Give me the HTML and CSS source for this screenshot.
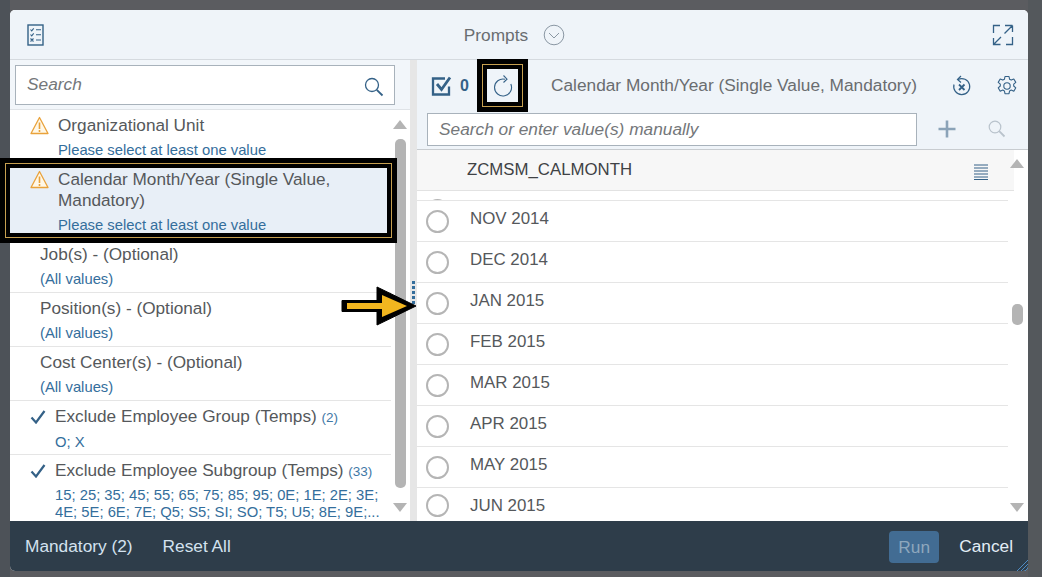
FILE: index.html
```html
<!DOCTYPE html>
<html lang="en">
<head>
<meta charset="utf-8">
<title>Prompts</title>
<link rel="stylesheet" href="styles.css">
</head>
<body>
<div class="dialog">
  <header class="head">
    <svg class="head-doc" width="18" height="22" viewBox="0 0 18 22"><rect x="1" y="1" width="15" height="20" fill="none" stroke="#346187" stroke-width="1.4"/><path d="M3.500 5.500l1.200 1.300 2-2.500M3.500 10.500l1.200 1.300 2-2.500M3.500 14.500l3 3M6.500 14.500l-3 3M9 5.700h5M9 10.700h5M9 16h5" fill="none" stroke="#346187" stroke-width="1.100"/></svg>
    <div class="head-title">
      <span>Prompts</span>
      <svg width="22" height="22" viewBox="0 0 22 22"><circle cx="11" cy="11" r="9.800" fill="none" stroke="#8a97a3" stroke-width="1"/><path d="M6 9l5 5 5-5" fill="none" stroke="#8a97a3" stroke-width="1"/></svg>
    </div>
    <svg class="head-exp" width="22" height="22" viewBox="0 0 22 22"><path d="M8 1.500H1.500V9M13 1.500h7.500M20.500 1.500L12.500 9.500M20.500 1.500V8M1.500 20.500L9 13M1.500 14v6.500h7M14 20.500h6.500V13" fill="none" stroke="#346187" stroke-width="1.300"/></svg>
  </header>
  <div class="main">
    <section class="left">
      <div class="left-search">
        <div class="search-box">
          <span>Search</span>
          <svg width="20" height="20" viewBox="0 0 20 20"><circle cx="8" cy="8" r="6.500" fill="none" stroke="#346187" stroke-width="1.300"/><path d="M12.800 12.800L18.500 18.500" stroke="#346187" stroke-width="1.800"/></svg>
        </div>
      </div>
      <div class="prompt-list">
        <div class="prompt warn-row">
          <svg class="warn" width="19" height="19" viewBox="0 0 19 19"><path d="M9.500 1.500L18 17.500H1z" fill="#fff8e8" stroke="#e9a23b" stroke-width="1.300" stroke-linejoin="round"/><path d="M9.500 6.500v6.500M9.500 14v2" stroke="#e9a23b" stroke-width="1.600"/></svg>
          <div class="prompt-text"><div class="prompt-title">Organizational Unit</div><div class="prompt-sub">Please select at least one value</div></div>
        </div>
        <div class="prompt warn-row selected">
          <svg class="warn" width="19" height="19" viewBox="0 0 19 19"><path d="M9.500 1.500L18 17.500H1z" fill="#fff8e8" stroke="#e9a23b" stroke-width="1.300" stroke-linejoin="round"/><path d="M9.500 6.500v6.500M9.500 14v2" stroke="#e9a23b" stroke-width="1.600"/></svg>
          <div class="prompt-text"><div class="prompt-title">Calendar Month/Year (Single Value, Mandatory)</div><div class="prompt-sub">Please select at least one value</div></div>
          <div class="mark"></div>
        </div>
        <div class="prompt plain"><div class="prompt-text"><div class="prompt-title">Job(s) - (Optional)</div><div class="prompt-sub">(All values)</div></div></div>
        <div class="prompt plain"><div class="prompt-text"><div class="prompt-title">Position(s) - (Optional)</div><div class="prompt-sub">(All values)</div></div></div>
        <div class="prompt plain"><div class="prompt-text"><div class="prompt-title">Cost Center(s) - (Optional)</div><div class="prompt-sub">(All values)</div></div></div>
        <div class="prompt check-row">
          <svg class="check" width="16" height="14" viewBox="0 0 16 14"><path d="M1.500 7.500L6 12.500 14.500 1" fill="none" stroke="#346187" stroke-width="2.200"/></svg>
          <div class="prompt-text"><div class="prompt-title">Exclude Employee Group (Temps) <small>(2)</small></div><div class="prompt-sub">O; X</div></div>
        </div>
        <div class="prompt check-row last">
          <svg class="check" width="16" height="14" viewBox="0 0 16 14"><path d="M1.500 7.500L6 12.500 14.500 1" fill="none" stroke="#346187" stroke-width="2.200"/></svg>
          <div class="prompt-text"><div class="prompt-title">Exclude Employee Subgroup (Temps) <small>(33)</small></div><div class="prompt-sub tight">15; 25; 35; 45; 55; 65; 75; 85; 95; 0E; 1E; 2E; 3E; 4E; 5E; 6E; 7E; Q5; S5; SI; SO; T5; U5; 8E; 9E;...</div></div>
        </div>
      </div>
      <div class="scroll left-scroll">
        <i class="up"></i><i class="thumb left-thumb"></i><i class="down"></i>
      </div>
    </section>
    <div class="splitter"><i></i><i></i><i></i><i></i><i></i></div>
    <section class="right">
      <div class="toolbar">
        <svg class="tick" width="22" height="20" viewBox="0 0 22 20"><path d="M14 2.500H2v16h16v-8" fill="none" stroke="#346187" stroke-width="2.300"/><path d="M6 8l4.500 5.500L19 1.500" fill="none" stroke="#346187" stroke-width="2.800"/></svg>
        <b class="count">0</b>
        <div class="refresh">
          <svg width="20" height="22" viewBox="0 0 20 22"><path d="M12 4.200A8.500 8.500 0 1 0 17.800 9" fill="none" stroke="#346187" stroke-width="1.100"/><path d="M10.500 .5L14 4.200 10.500 7.500" fill="none" stroke="#346187" stroke-width="1.100"/></svg>
        </div>
        <div class="tool-title">Calendar Month/Year (Single Value, Mandatory)</div>
        <svg class="undo" width="20" height="22" viewBox="0 0 20 22"><path d="M6 4.500a8 8 0 1 1-4 5" fill="none" stroke="#346187" stroke-width="1.200"/><path d="M9 1L5.500 4.500 9 7.500" fill="none" stroke="#346187" stroke-width="1.200"/><path d="M7 9.500l5.500 5.500M12.500 9.500L7 15" stroke="#346187" stroke-width="1.800"/></svg>
        <svg class="gear" width="22" height="22" viewBox="0 0 22 22"><path d="M9 1.500h4l.6 2.800 1.600.8 2.600-1.100 2 3.400-2.100 1.800v1.800l2.100 1.800-2 3.400-2.600-1.100-1.600.8-.6 2.800H9l-.6-2.800-1.600-.8-2.600 1.100-2-3.400 2.100-1.800V9.200L2.200 7.400l2-3.400 2.600 1.100 1.600-.8z" fill="none" stroke="#346187" stroke-width="1.100" stroke-linejoin="round"/><circle cx="11" cy="11" r="3.200" fill="none" stroke="#346187" stroke-width="1.100"/></svg>
      </div>
      <div class="value-search">
        <div class="value-box">Search or enter value(s) manually</div>
        <svg class="plus" width="20" height="20" viewBox="0 0 20 20"><path d="M10 1.500v17M1.500 10h17" stroke="#8ba3b8" stroke-width="2.600"/></svg>
        <svg class="lens" width="18" height="18" viewBox="0 0 18 18"><circle cx="7" cy="7" r="5.800" fill="none" stroke="#b9c3cc" stroke-width="1.200"/><path d="M11.200 11.200L16.500 16.500" stroke="#b9c3cc" stroke-width="1.800"/></svg>
      </div>
      <div class="table">
        <div class="table-main">
          <div class="table-head">
            <span>ZCMSM_CALMONTH</span>
            <svg width="14" height="16" viewBox="0 0 14 16"><path d="M0 1h14M0 4h14M0 7h14M0 10h14M0 13h14M0 15.500h14" stroke="#346187" stroke-width="1"/></svg>
          </div>
          <div class="row cut"><i class="radio"></i></div>
          <div class="row"><i class="radio"></i><span>NOV 2014</span></div>
          <div class="row"><i class="radio"></i><span>DEC 2014</span></div>
          <div class="row"><i class="radio"></i><span>JAN 2015</span></div>
          <div class="row"><i class="radio"></i><span>FEB 2015</span></div>
          <div class="row"><i class="radio"></i><span>MAR 2015</span></div>
          <div class="row"><i class="radio"></i><span>APR 2015</span></div>
          <div class="row"><i class="radio"></i><span>MAY 2015</span></div>
          <div class="row end"><i class="radio"></i><span>JUN 2015</span></div>
        </div>
        <div class="scroll right-scroll">
          <i class="up"></i><i class="thumb right-thumb"></i><i class="down"></i>
        </div>
      </div>
      <div class="refresh-mark"></div>
    </section>
  </div>
  <footer class="foot">
    <span class="foot-link">Mandatory (2)</span>
    <span class="foot-link">Reset All</span>
    <span class="run">Run</span>
    <span class="foot-link cancel">Cancel</span>
    <svg class="grip" width="11" height="11" viewBox="0 0 11 11"><path d="M0 11L11 0M4 11L11 4M8 11L11 8" stroke="#4f8cc4" stroke-width="1"/></svg>
  </footer>
  <svg class="arrow" width="78" height="42" viewBox="0 0 78 42"><path d="M2 15.500h35V2L76 21 37 40V26.500H2z" fill="#000" stroke="#000" stroke-width="1"/><path d="M7 18h35V10L67 21 42 32v-8H7z" fill="#f2b61f"/></svg>
</div>
</body>
</html>
```
FILE: styles.css
```css
* { box-sizing: border-box; }
html, body { margin: 0; height: 100%; }
body {
  width: 1042px; height: 577px; overflow: hidden; padding: 10px 14px 6px 10px;
  background: linear-gradient(90deg, #4d5258 0 10px, #5b5c60 10px 1028px, #54585c 1028px);
  font-family: "Liberation Sans", Arial, sans-serif;
  color: #4f5357;
}
i { display: block; }
.dialog { position: relative; width: 1018px; height: 561px; display: flex; flex-direction: column; border-radius: 5px; background: #fff; }
.head { height: 50px; flex: none; display: flex; align-items: center; justify-content: space-between; padding: 0 14px 0 17px; background: #eff4f9; border-bottom: 1px solid #d5dadf; border-radius: 5px 5px 0 0; }
.head-title { display: flex; align-items: center; gap: 15px; font-size: 17.300px; color: #6a6d70; margin-right: 8px; padding-top: 1px; }
.main { flex: 1; display: flex; min-height: 0; }
.left { width: 400px; flex: none; position: relative; background: #fff; }
.left-search { height: 50px; padding: 5px 15px 0 5px; background: #f2f6fa; border-bottom: 1px solid #dfe3e7; }
.search-box { height: 40px; border: 1px solid #a8b2bb; background: #fff; display: flex; align-items: center; justify-content: space-between; padding: 0 10px 2px 11px; font-size: 17.300px; font-style: italic; color: #74777a; }
.search-box svg { margin-top: 5px; }
.prompt-list { width: 381px; }
.prompt { position: relative; display: flex; height: 54px; border-bottom: 1px solid #e5e5e5; padding-top: 5px; }
.prompt-title { font-size: 17.200px; line-height: 21px; color: #55585b; }
.prompt-title small { font-size: 13.500px; color: #3f78a6; }
.prompt-sub { font-size: 14.800px; line-height: 17px; margin-top: 6px; color: #346e9c; }
.prompt-sub.tight { margin-top: 5px; line-height: 17px; width: 328px; }
.warn-row { padding-left: 48px; border-bottom: none; }
.warn { position: absolute; left: 20px; top: 6px; }
.plain { padding-left: 30px; }
.check-row { padding-left: 45px; }
.check { position: absolute; left: 20px; top: 9px; }
.selected { height: 75px; background: #e8eff7; z-index: 2; }
.selected .prompt-title { width: 290px; }
.mark { position: absolute; inset: 4px 4px 6px 0; box-shadow: 0 0 0 4px #000, 0 0 0 5px #c7a050, 0 0 0 10px #000; }
.last { height: 66px; border-bottom: none; overflow: hidden; }
.scroll { position: absolute; top: 0; display: flex; flex-direction: column; align-items: center; }
.scroll .up { width: 0; height: 0; border-style: solid; border-width: 0 7px 9px; border-color: transparent transparent #b4b4b4; }
.scroll .down { width: 0; height: 0; border-style: solid; border-width: 9px 7px 0; border-color: #b4b4b4 transparent transparent; }
.thumb { width: 11px; background: #b4b4b4; border-radius: 5px; }
.left-scroll { left: 380px; top: 60px; width: 20px; height: 392px; justify-content: space-between; }
.left-thumb { height: 349px; margin-top: -5px; }
.splitter { width: 7px; flex: none; background: #e6e6e6; display: flex; flex-direction: column; justify-content: flex-start; align-items: center; gap: 2px; padding: 221px 0 0; }
.splitter i { width: 3px; height: 3px; background: #346e9c; }
.right { flex: 1; position: relative; min-width: 0; display: flex; flex-direction: column; background: #eff4f9; }
.toolbar { height: 53px; flex: none; position: relative; display: flex; align-items: center; padding: 0 10px 2px 14px; }
.count { font-size: 16px; color: #346187; margin-left: 7px; width: 18px; }
.refresh { width: 31px; height: 33px; background: #eff4f9; margin-left: 9px; display: flex; align-items: center; justify-content: center; }
.tool-title { font-size: 17.300px; color: #6a6d70; margin-left: 33px; width: 399px; white-space: nowrap; }
.undo { margin-left: 2px; }
.gear { margin-left: 24px; }
.refresh-mark { position: absolute; left: 70px; top: 9px; width: 31px; height: 33px; box-shadow: 0 0 0 4px #000, 0 0 0 5px #c7a050, 0 0 0 10px #000; }
.value-search { height: 37px; flex: none; display: flex; align-items: flex-start; padding: 0 22px 0 10px; border-bottom: 1px solid #c8ccd0; }
.value-box { width: 490px; flex: none; height: 33px; border: 1px solid #a8b2bb; background: #fff; font-size: 17.300px; font-style: italic; color: #74777a; line-height: 30px; padding-left: 11px; }
.plus { margin: 6px 0 0 20px; flex: none; }
.lens { margin: 7px 0 0 31px; flex: none; }
.table { flex: 1; display: flex; position: relative; background: #fff; min-height: 0; }
.table-main { width: 591px; flex: none; }
.table-head { width: 597px; height: 41px; background: #f7f7f7; border-bottom: 1px solid #e2e2e2; display: flex; align-items: center; justify-content: space-between; padding: 0 27px 0 50px; font-size: 16.800px; color: #3f4245; position: relative; }
.table-head svg { margin-right: -1px; margin-top: 3px; }
.row { height: 41px; display: flex; align-items: center; border-bottom: 1px solid #e5e5e5; padding-left: 9px; font-size: 16.900px; color: #55585b; overflow: hidden; }
.row span { margin-left: 21px; margin-bottom: 5px; }
.radio { width: 23px; height: 23px; flex: none; border: 2px solid #b5b5b5; border-radius: 50%; background: #fff; }
.cut { height: 10px; align-items: flex-end; }
.cut .radio { margin-bottom: -22px; }
.end { height: 34px; border-bottom: none; align-items: flex-start; padding-top: 6px; }
.end span { margin-bottom: 0; margin-top: 2px; }
.right-scroll { left: 593px; top: 9px; width: 14px; height: 353px; }
.right-scroll .down { margin-top: auto; }
.right-thumb { height: 21px; margin-top: 136px; }
.foot { height: 50px; flex: none; position: relative; display: flex; align-items: center; padding: 1px 15px 0 15px; background: #2e3d4a; border-radius: 0 0 5px 5px; font-size: 17.300px; }
.foot-link { color: #d4e2ef; margin-right: 30px; }
.run { margin-left: auto; width: 50px; height: 32px; background: #426c93; color: #8ea7bd; border-radius: 4px; text-align: center; line-height: 32px; margin-right: 20px; }
.cancel { color: #e3edf6; margin-right: 0; }
.grip { position: absolute; right: 0; bottom: 0; }
.arrow { position: absolute; left: 330px; top: 275px; }
```
